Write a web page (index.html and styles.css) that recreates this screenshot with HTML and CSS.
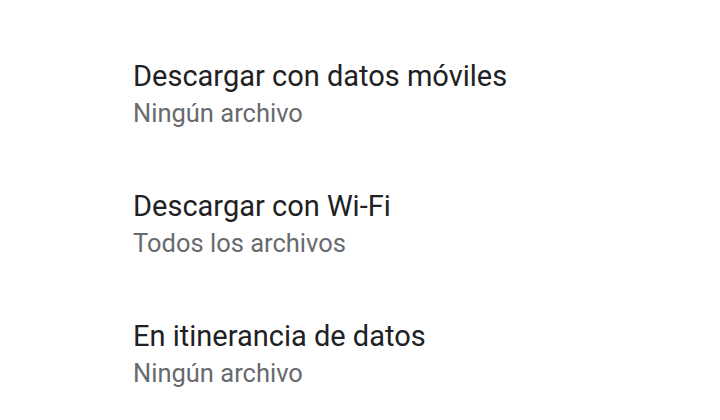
FILE: index.html
```html
<!DOCTYPE html>
<html lang="es">
<head>
    <meta charset="UTF-8">
    <meta name="viewport" content="width=device-width, initial-scale=1.0">
    <title>Descarga automática</title>
    <link rel="stylesheet" href="styles.css">
</head>
<body>
    <div class="pref-list">
        <div class="pref-item">
            <div class="pref-title">Descargar con datos móviles</div>
            <div class="pref-summary">Ningún archivo</div>
        </div>
        <div class="pref-item">
            <div class="pref-title">Descargar con Wi-Fi</div>
            <div class="pref-summary">Todos los archivos</div>
        </div>
        <div class="pref-item">
            <div class="pref-title">En itinerancia de datos</div>
            <div class="pref-summary">Ningún archivo</div>
        </div>
    </div>
</body>
</html>
```

FILE: styles.css
```css
body {
    margin: 0;
    background-color: #ffffff;
    font-family: Roboto, "Noto Sans", sans-serif;
}
.pref-list {
    display: flex;
    flex-direction: column;
    padding: 58px 0 0 133px;
    gap: 59px;
}
.pref-item {
    display: flex;
    flex-direction: column;
    gap: 3px;
}
.pref-title {
    font-size: 29px;
    line-height: 36px;
    color: #202124;
}
.pref-summary {
    font-size: 25.5px;
    line-height: 32px;
    color: #676a6e;
}
```
